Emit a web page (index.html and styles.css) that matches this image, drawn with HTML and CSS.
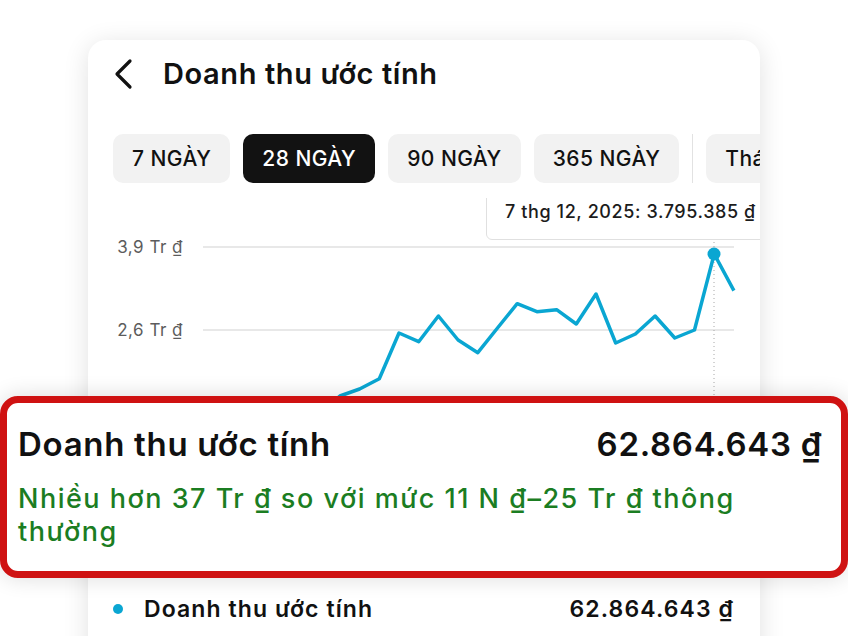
FILE: index.html
```html
<!DOCTYPE html>
<html lang="vi">
<head>
<meta charset="utf-8">
<title>Doanh thu ước tính</title>
<link rel="stylesheet" href="styles.css">
</head>
<body>
<div class="page">
  <div class="card">
    <div class="header">
      <svg class="back" width="22" height="32" viewBox="0 0 22 32"><path d="M17 3 L4 16 L17 29" fill="none" stroke="#111" stroke-width="3.2" stroke-linecap="round" stroke-linejoin="round"/></svg>
      <h1 class="title">Doanh thu ước tính</h1>
    </div>
    <div class="tabs">
      <div class="tab">7 NGÀY</div>
      <div class="tab active">28 NGÀY</div>
      <div class="tab">90 NGÀY</div>
      <div class="tab">365 NGÀY</div>
      <div class="sep"></div>
      <div class="tab">Tháng 12</div>
    </div>
    <div class="chart">
      <svg class="plot" width="672" height="392" viewBox="88 198 672 392">
        <line x1="203" y1="247" x2="734" y2="247" class="grid"/>
        <line x1="203" y1="330" x2="734" y2="330" class="grid"/>
        <line x1="203" y1="413" x2="734" y2="413" class="grid"/>
        <line x1="203" y1="496" x2="734" y2="496" class="grid"/>
        <text x="183" y="253" class="ylab">3,9 Tr ₫</text>
        <text x="183" y="336" class="ylab">2,6 Tr ₫</text>
        <line x1="714" y1="242" x2="714" y2="500" class="cursor"/>
        <polyline class="series" points="202,470 221.7,455 241.4,462 261.1,440 280.8,430 300.5,436 320.2,412 339.9,396 359.6,389 379.3,378.7 399,333 418.7,341.7 438.4,316 458.1,340 477.8,352.7 497.5,328 517.2,303.7 536.9,311.7 556.6,309.7 576.3,324 596,294 615.7,343 635.4,334 655.1,316 674.8,338 694.5,330 714.2,254 733.9,290.7"/>
        <circle cx="714" cy="254" r="6.5" class="dot"/>
      </svg>
      <div class="tooltip">7 thg 12, 2025: 3.795.385 ₫</div>
    </div>
    <div class="legend">
      <span class="ldot"></span>
      <span class="lname">Doanh thu ước tính</span>
      <span class="lval">62.864.643 ₫</span>
    </div>
  </div>
</div>
<div class="callout">
  <div class="c-row">
    <span class="c-title">Doanh thu ước tính</span>
    <span class="c-val">62.864.643 ₫</span>
  </div>
  <p class="c-note">Nhiều hơn 37 Tr ₫ so với mức 11 N ₫–25 Tr ₫ thông thường</p>
</div>
</body>
</html>
```
FILE: styles.css
```css
html, body {
  margin: 0;
  padding: 0;
  height: 100%;
  overflow: hidden;
  background: #ffffff;
}
body {
  font-family: Inter, "Noto Sans", "DejaVu Sans", sans-serif;
  color: #111;
}
.page {
  padding: 40px 0 0 88px;
}
.card {
  width: 672px;
  height: 640px;
  background: #fff;
  border-radius: 18px;
  box-shadow: 0 4px 26px rgba(0, 0, 0, 0.12);
  overflow: hidden;
}
.header {
  display: flex;
  align-items: center;
  gap: 28px;
  height: 32px;
  padding: 18px 0 0 25px;
}
.back {
  display: block;
  flex: none;
}
.title {
  margin: 0;
  font-size: 29px;
  line-height: 32px;
  font-weight: 600;
  letter-spacing: 0.6px;
}
.tabs {
  display: flex;
  align-items: stretch;
  gap: 13px;
  margin-top: 44px;
  padding-left: 25px;
  height: 49px;
  white-space: nowrap;
  overflow: hidden;
}
.tab {
  flex: none;
  display: flex;
  align-items: center;
  padding: 0 19px;
  border-radius: 10px;
  background: #f2f2f2;
  font-size: 21px;
  font-weight: 500;
  letter-spacing: 0.45px;
  color: #111;
}
.tab.active {
  background: #121212;
  color: #fff;
}
.sep {
  flex: none;
  width: 1px;
  background: #e2e2e2;
}
.chart {
  position: relative;
  height: 392px;
  margin-top: 15px;
  overflow: hidden;
}
.plot {
  display: block;
}
.grid {
  stroke: #e8e8e8;
  stroke-width: 2;
}
.ylab {
  font-family: Inter, "Noto Sans", sans-serif;
  font-size: 17px;
  letter-spacing: 0.5px;
  fill: #5c5c5c;
  text-anchor: end;
}
.cursor {
  stroke: #a8a8a8;
  stroke-width: 1;
  stroke-dasharray: 1 3;
}
.series {
  fill: none;
  stroke: #0aa6d2;
  stroke-width: 3.5;
  stroke-linejoin: round;
}
.dot {
  fill: #0aa6d2;
}
.tooltip {
  position: absolute;
  left: 398px;
  top: -20px;
  width: 320px;
  height: 62px;
  box-sizing: border-box;
  padding: 22px 0 0 18px;
  background: #fff;
  border: 1.5px solid #e0e0e0;
  border-radius: 6px;
  font-size: 18px;
  line-height: 21px;
  font-weight: 500;
  letter-spacing: 0.6px;
  color: #1c1c1c;
  white-space: nowrap;
}
.legend {
  display: flex;
  align-items: center;
  height: 38px;
  padding: 0 26px 0 25px;
}
.ldot {
  width: 10px;
  height: 10px;
  border-radius: 50%;
  background: #0aa6d2;
  margin-right: 21px;
}
.lname,
.lval {
  font-size: 23px;
  font-weight: 600;
  letter-spacing: 1.1px;
}
.lval {
  margin-left: auto;
}
.callout {
  position: absolute;
  left: 0;
  top: 396px;
  width: 848px;
  height: 182px;
  box-sizing: border-box;
  border: 7px solid #cf1212;
  border-radius: 18px;
  background: #fff;
  padding: 23px 19px 0 11px;
  box-shadow: 0 0 22px rgba(0, 0, 0, 0.14);
}
.c-row {
  display: flex;
  justify-content: space-between;
  align-items: baseline;
  font-size: 33px;
  line-height: 37px;
  font-weight: 600;
  letter-spacing: 0.7px;
}
.c-note {
  max-width: 760px;
  margin: 19px 0 0;
  font-size: 27px;
  line-height: 33px;
  font-weight: 500;
  letter-spacing: 1.5px;
  color: #1b7d22;
}
```
